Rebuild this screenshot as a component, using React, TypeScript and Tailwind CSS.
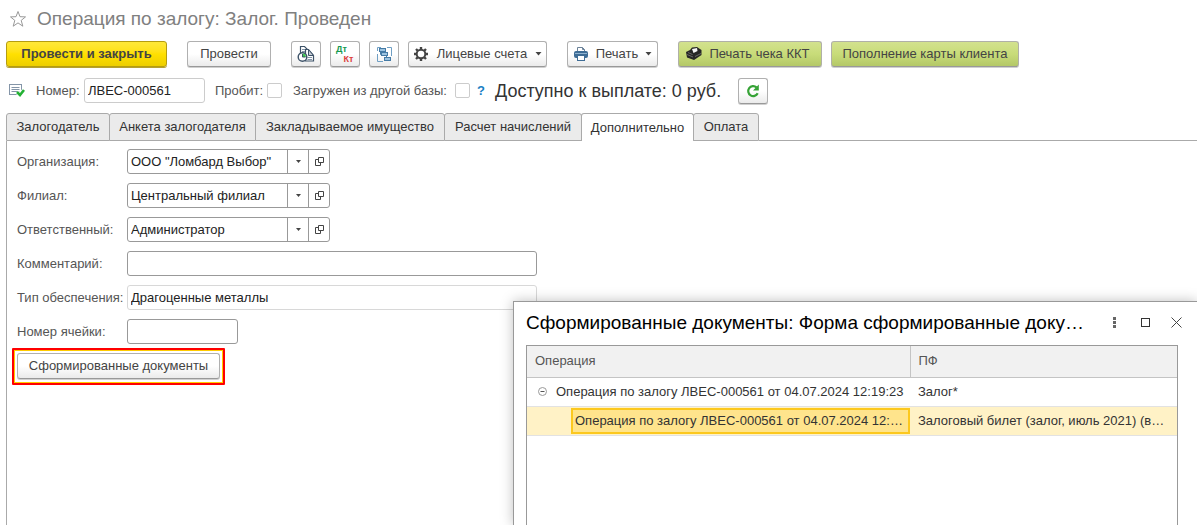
import type { ReactNode } from "react";
import clsx from "clsx";

const tabs = [
  { title: "Залогодатель", width: "w-[104px]" },
  { title: "Анкета залогодателя", width: "w-[147px]" },
  { title: "Закладываемое имущество", width: "w-[190px]" },
  { title: "Расчет начислений", width: "w-[138px]" },
  { title: "Дополнительно", width: "w-[113px]" },
  { title: "Оплата", width: "w-[66px]" },
];

const activeTab = "Дополнительно";

interface ToolButtonProps {
  children: ReactNode;
  variant?: "default" | "primary" | "green";
  className?: string;
  label?: string;
}

function ToolButton({
  children,
  variant = "default",
  className,
  label,
}: ToolButtonProps) {
  return (
    <button
      type="button"
      aria-label={label}
      className={clsx(
        "flex h-[26px] shrink-0 items-center justify-center whitespace-nowrap rounded-[3px] border text-[#444]",
        variant === "default" &&
          "border-[#b0b0b0] border-b-[#999] bg-linear-to-b from-white from-50% to-[#ebebeb] shadow-[0_1px_0_#d0d0d0]",
        variant === "primary" &&
          "border-[#b59d10] bg-linear-to-b from-[#ffe838] via-[#ffe000] to-[#edce00] font-bold shadow-[0_1px_0_#b5a030]",
        variant === "green" &&
          "border-[#b0b0a8] border-b-[#999] bg-linear-to-b from-[#d3e28e] via-[#c8dc79] to-[#b4c867] shadow-[0_1px_0_#d0d0d0]",
        className
      )}
    >
      {children}
    </button>
  );
}

function CaretIcon() {
  return (
    <svg width="7" height="4" viewBox="0 0 7 4" fill="#444">
      <path d="M0.5 0h6L3.5 3.5z" />
    </svg>
  );
}

function SmallCaretIcon() {
  return (
    <svg width="5" height="3" viewBox="0 0 5 3" fill="#444">
      <path d="M0 0h5L2.5 3z" />
    </svg>
  );
}

function StarIcon() {
  return (
    <svg width="18" height="18" viewBox="0 0 18 18" fill="none" stroke="#999">
      <path d="M9 1.5l2 5.2 5.5.2-4.3 3.5 1.6 5.8L9 12.9l-4.8 3.3 1.6-5.8L1.5 6.900l5.500-.2z" />
    </svg>
  );
}

function PostedIcon() {
  return (
    <svg width="16" height="14" viewBox="0 0 16 14" fill="none">
      <rect x="0.5" y="0.5" width="12" height="10" fill="#fff" stroke="#8495a8" />
      <path d="M2.5 3.5h8M2.5 5.5h8M2.5 7.5h8" stroke="#8495a8" />
      <path d="M8 8l3 3L15 6" stroke="#fff" strokeWidth="4" />
      <path d="M8 8l3 3L15 6" stroke="#23b134" strokeWidth="2.6" />
    </svg>
  );
}

function ReportsIcon() {
  return (
    <svg width="18" height="18" viewBox="0 0 18 18" fill="none">
      <path
        d="M3.5 9V1.5h4l3.5 3.5v9H3.5z"
        fill="#fff"
        stroke="#3d5268"
        strokeWidth="1.2"
      />
      <path
        d="M8.5 4.5h3l5 6v5.5h-8z"
        fill="#fff"
        stroke="#3d5268"
        strokeWidth="1.2"
      />
      <path d="M11.5 4.5v6h5z" fill="#c5ccd4" stroke="#3d5268" />
      <path d="M10.5 12.5h4.5M10.5 14.5h4.5M5 4.5h3M5 6.5h3" stroke="#8495a8" />
      <circle cx="5.5" cy="12" r="4.3" fill="#fff" stroke="#3d5268" strokeWidth="1.4" />
      <path d="M5.5 12V8.600a3.400 3.400 0 0 1 3.400 3.400z" fill="#3fc94f" />
      <path d="M5.5 9v3h3" stroke="#3d5268" />
    </svg>
  );
}

function StructureIcon() {
  return (
    <svg width="15" height="15" viewBox="0 0 15 15" fill="none">
      <path d="M4 0.5H0.5V4M0.5 7v7.5H6M10 0.5h4.5V9" stroke="#6f9fc4" />
      <path d="M3.5 5v2.5H5M9.5 8v4" stroke="#447aa5" />
      <g fill="#9cc3e0" stroke="#447aa5">
        <rect x="2.5" y="1.5" width="6" height="3" />
        <rect x="4.5" y="5.5" width="6" height="3" />
        <rect x="7.5" y="10.5" width="6" height="3" />
      </g>
    </svg>
  );
}

function GearIcon() {
  return (
    <svg width="16" height="16" viewBox="0 0 16 16" fill="none" stroke="#444">
      <circle cx="8" cy="8" r="4.3" strokeWidth="2" />
      <path
        d="M8 1v3M8 12v3M1 8h3M12 8h3M3 3l2 2M11 11l2 2M13 3l-2 2M5 11l-2 2"
        strokeWidth="2.4"
      />
    </svg>
  );
}

function PrinterIcon() {
  return (
    <svg width="16" height="16" viewBox="0 0 16 16">
      <path d="M4.5 6V1.5h5l2 2V6" fill="#fff" stroke="#6b8299" />
      <path d="M9.5 1.5v2h2" fill="none" stroke="#6b8299" />
      <rect x="1" y="5" width="14" height="7" rx="2" fill="#3f6d96" />
      <path d="M2 7.5h12" stroke="#8fb3d1" />
      <rect x="4.5" y="9.5" width="7" height="5" fill="#fff" stroke="#3f6d96" />
    </svg>
  );
}

function CashRegisterIcon() {
  return (
    <svg width="16" height="14" viewBox="0 0 16 14">
      <path d="M0 5l4-2 2-2.5 5-.5 4.500 3v5L8 13 1 10.500z" fill="#262626" />
      <path d="M6 2l5-1 .5 3-4 2z" fill="#f4f4f4" />
      <path d="M1 7.500l6 2.500M2 5.500l4.500 2M9 9.500L15 6.500" stroke="#777" strokeWidth="0.8" />
    </svg>
  );
}

function RefreshIcon() {
  return (
    <svg width="14" height="14" viewBox="0 0 14 14" fill="none">
      <path
        d="M10.5 3.3A5 5 0 1 0 11.7 9.3"
        stroke="#36a336"
        strokeWidth="2.2"
      />
      <path d="M12.8 0.5V6.500H7z" fill="#36a336" />
    </svg>
  );
}

function OpenIcon() {
  return (
    <svg width="9" height="9" viewBox="0 0 9 9" fill="none" stroke="#444">
      <path d="M3.5 0.5h5v5h-5z" />
      <path d="M3 2.5H0.5v6h5V6" />
    </svg>
  );
}

interface FieldRowProps {
  id: string;
  label: string;
  children: ReactNode;
}

function FieldRow({ id, label, children }: FieldRowProps) {
  return (
    <div className="flex h-[25px] items-center">
      <label htmlFor={id} className="w-[110px] shrink-0 whitespace-nowrap text-[#555]">
        {label}
      </label>
      {children}
    </div>
  );
}

function ReferenceField({ id, label, value }: { id: string; label: string; value: string }) {
  return (
    <FieldRow id={id} label={label}>
      <div className="flex h-[25px] w-[203px] rounded-[3px] border border-[#999] bg-white">
        <div className="grid flex-1 grid-cols-[1fr_21px]">
          <select
            id={id}
            className="col-span-2 col-start-1 row-start-1 appearance-none bg-transparent pl-[3px] pr-6 text-[#222] outline-none"
          >
            <option>{value}</option>
          </select>
          <span className="pointer-events-none col-start-2 row-start-1 flex items-center justify-center border-l border-[#999]">
            <SmallCaretIcon />
          </span>
        </div>
        <button
          type="button"
          aria-label={`Открыть: ${label}`}
          className="flex w-[21px] items-center justify-center border-l border-[#999]"
        >
          <OpenIcon />
        </button>
      </div>
    </FieldRow>
  );
}

function DocumentsDialog() {
  return (
    <section
      role="dialog"
      aria-labelledby="dialog-title"
      className="absolute bottom-0 left-[513px] right-0 top-[301px] flex flex-col overflow-hidden border-l border-t border-[#999] bg-white pl-3 pr-[19px] shadow-[0_0_12px_rgba(0,0,0,0.25)]"
    >
      <header className="flex h-[43px] items-center pb-[2px]">
        <h2
          id="dialog-title"
          className="min-w-0 flex-1 truncate text-[19px] leading-6 text-black"
        >
          Сформированные документы: Форма сформированные доку…
        </h2>
        <div className="-mr-[14px] flex items-center">
          <button type="button" aria-label="Ещё" className="flex w-[31px] justify-center">
            <svg width="3" height="11" viewBox="0 0 3 11" fill="#666">
              <path d="M0 0h3v3H0zM0 4h3v3H0zM0 8h3v3H0z" />
            </svg>
          </button>
          <button type="button" aria-label="Развернуть" className="flex w-[31px] justify-center">
            <svg width="9" height="9" viewBox="0 0 9 9" fill="none" stroke="#333">
              <rect x="0.5" y="0.5" width="8" height="8" />
            </svg>
          </button>
          <button type="button" aria-label="Закрыть" className="flex w-[31px] justify-center">
            <svg width="11" height="11" viewBox="0 0 11 11" stroke="#444">
              <path d="M0.5 0.5l10 10M10.5 0.5l-10 10" />
            </svg>
          </button>
        </div>
      </header>

      <div className="flex-1 border-x border-t border-[#999]">
        <table className="w-full table-fixed border-collapse text-left text-[#333]">
          <colgroup>
            <col className="w-[383px]" />
            <col />
          </colgroup>
          <thead>
            <tr className="h-[31px] border-b border-[#c4c4c4] bg-[#f1f1f1] text-[#555]">
              <th className="border-r border-[#c4c4c4] px-2 font-normal">Операция</th>
              <th className="px-2 font-normal">ПФ</th>
            </tr>
          </thead>
          <tbody>
            <tr className="h-[29px] border-b border-[#e2e2e2]">
              <td className="pl-[11px]">
                <div className="flex items-center gap-[9px] whitespace-nowrap">
                  <button type="button" aria-label="Свернуть">
                    <svg
                      width="9"
                      height="9"
                      viewBox="0 0 9 9"
                      fill="none"
                      stroke="#999"
                      className="block"
                    >
                      <circle cx="4.5" cy="4.5" r="4" />
                      <path d="M2.5 4.5h4" stroke="#555" />
                    </svg>
                  </button>
                  Операция по залогу ЛВЕС-000561 от 04.07.2024 12:19:23
                </div>
              </td>
              <td className="px-2">Залог*</td>
            </tr>
            <tr className="h-[29px] border-b border-[#e2e2e2] bg-[#fff2c6]">
              <td className="pl-[44px]">
                <div className="h-[26px] truncate border-2 border-[#fcc81e] bg-[#ffe48c] px-[2px] leading-[22px]">
                  Операция по залогу ЛВЕС-000561 от 04.07.2024 12:…
                </div>
              </td>
              <td className="truncate px-2">Залоговый билет (залог, июль 2021) (в…</td>
            </tr>
          </tbody>
        </table>
      </div>
    </section>
  );
}

export default function App() {
  return (
    <div className="relative flex min-h-screen flex-col overflow-hidden bg-white font-['Liberation_Sans',Arial,sans-serif] text-[13px] leading-4">
      <header className="flex h-[37px] items-center gap-[10px] pl-[9px]">
        <button type="button" aria-label="В избранное">
          <StarIcon />
        </button>
        <h1 className="text-[19px] leading-6 text-[#808080]">
          Операция по залогу: Залог. Проведен
        </h1>
      </header>

      <div className="flex items-center pl-[6px] pt-1">
        <ToolButton variant="primary" className="w-[161px]">
          Провести и закрыть
        </ToolButton>
        <ToolButton className="ml-5 w-[84px]">Провести</ToolButton>
        <div className="ml-5 flex gap-[9px]">
          <ToolButton className="w-[30px]" label="Отчеты">
            <ReportsIcon />
          </ToolButton>
          <ToolButton className="w-[30px]" label="Проводки">
            <span className="flex flex-col text-[9px] font-bold leading-[10px]">
              <span className="pr-[7px] text-[#159a50]">Дт</span>
              <span className="pl-[7px] text-[#dc3c3c]">Кт</span>
            </span>
          </ToolButton>
          <ToolButton className="w-[30px]" label="Структура подчиненности">
            <StructureIcon />
          </ToolButton>
          <ToolButton className="w-[139px] gap-2">
            <GearIcon />
            Лицевые счета
            <CaretIcon />
          </ToolButton>
        </div>
        <ToolButton className="ml-5 w-[91px] gap-[7px]">
          <PrinterIcon />
          Печать
          <CaretIcon />
        </ToolButton>
        <ToolButton variant="green" className="ml-5 w-[144px] gap-[7px] pr-1">
          <CashRegisterIcon />
          Печать чека ККТ
        </ToolButton>
        <ToolButton variant="green" className="ml-[9px] w-[188px]">
          Пополнение карты клиента
        </ToolButton>
      </div>

      <div className="mt-[10px] flex h-[27px] items-center whitespace-nowrap pl-[9px] text-[#555]">
        <PostedIcon />
        <label htmlFor="number" className="ml-[11px] w-12">
          Номер:
        </label>
        <input
          id="number"
          defaultValue="ЛВЕС-000561"
          className="h-[25px] w-[121px] rounded-[3px] border border-[#ccc] px-[3px] text-[#222] outline-none"
        />
        <label htmlFor="punched" className="ml-[10px] w-[52px]">
          Пробит:
        </label>
        <input
          id="punched"
          type="checkbox"
          className="size-[15px] appearance-none rounded-[2px] border border-[#ccc]"
        />
        <label htmlFor="imported" className="ml-[11px] w-[162px]">
          Загружен из другой базы:
        </label>
        <input
          id="imported"
          type="checkbox"
          className="size-[15px] appearance-none rounded-[2px] border border-[#ccc]"
        />
        <button type="button" className="ml-[7px] w-[8px] font-bold text-[#1a80c4]">
          ?
        </button>
        <span className="ml-[10px] w-[243px] text-lg text-[#333]">
          Доступно к выплате: 0 руб.
        </span>
        <ToolButton className="w-[30px]" label="Обновить">
          <RefreshIcon />
        </ToolButton>
      </div>

      <div role="tablist" className="mt-[9px] flex pl-[6px]">
        {tabs.map((tab, index) => (
          <button
            key={tab.title}
            type="button"
            role="tab"
            aria-selected={tab.title === activeTab}
            className={clsx(
              "h-[28px] shrink-0 whitespace-nowrap rounded-t-[3px] border-x border-t border-[#aaa] text-[#333]",
              tab.width,
              index > 0 && "-ml-px",
              tab.title === activeTab ? "bg-white" : "border-b bg-[#ebebeb]"
            )}
          >
            {tab.title}
          </button>
        ))}
        <div className="flex-1 border-b border-[#aaa]" />
      </div>

      <main className="ml-[6px] flex flex-1 flex-col items-start gap-1 border-l border-[#aaa] pl-[5px] pt-2">
        <div className="flex flex-col gap-[9px] pl-[5px]">
          <ReferenceField id="organization" label="Организация:" value={'ООО "Ломбард Выбор"'} />
          <ReferenceField id="branch" label="Филиал:" value="Центральный филиал" />
          <ReferenceField id="responsible" label="Ответственный:" value="Администратор" />
          <FieldRow id="comment" label="Комментарий:">
            <input
              id="comment"
              className="h-[25px] w-[410px] rounded-[3px] border border-[#999] px-[3px] text-[#222] outline-none"
            />
          </FieldRow>
          <FieldRow id="security" label="Тип обеспечения:">
            <input
              id="security"
              readOnly
              defaultValue="Драгоценные металлы"
              className="h-[25px] w-[410px] rounded-[3px] border border-[#d8d8d8] px-[3px] text-[#222] outline-none"
            />
          </FieldRow>
          <FieldRow id="cell" label="Номер ячейки:">
            <input
              id="cell"
              className="h-[25px] w-[111px] rounded-[3px] border border-[#999] px-[3px] text-[#222] outline-none"
            />
          </FieldRow>
        </div>
        {/* red and yellow frame draws attention to the button */}
        <div className="rounded-[1px] border-2 border-[#ff0000]">
          <div className="border border-[#ffcc00] px-[2px] pb-[3px] pt-[2px]">
            <ToolButton className="w-[203px]">Сформированные документы</ToolButton>
          </div>
        </div>
      </main>

      <DocumentsDialog />
    </div>
  );
}
